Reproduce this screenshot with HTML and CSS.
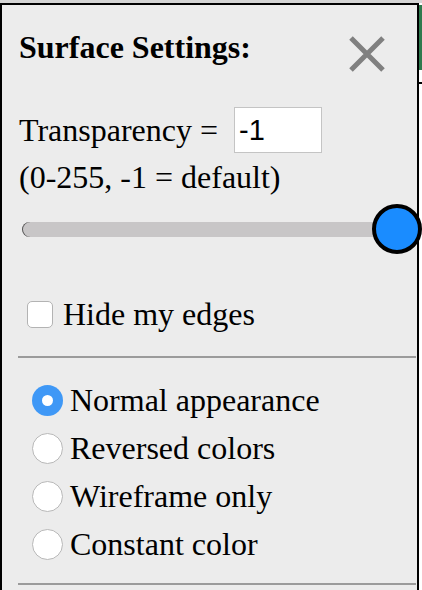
FILE: index.html
```html
<!DOCTYPE html>
<html>
<head>
<meta charset="utf-8">
<link rel="stylesheet" href="styles.css">
</head>
<body>
<div class="topbar"></div>
<div class="frame">
  <section class="panel">
    <header class="title-row">
      <h1 class="title">Surface Settings:</h1>
      <button class="close" aria-label="Close">
        <svg width="36" height="36" viewBox="0 0 36 36"><path d="M2 2L34 34M34 2L2 34" stroke="#808080" stroke-width="5" fill="none"/></svg>
      </button>
    </header>
    <div class="transp-row">
      <span class="label">Transparency =</span>
      <input class="num" type="text" value="-1">
    </div>
    <div class="hint">(0-255, -1 = default)</div>
    <div class="slider">
      <div class="track"></div>
      <div class="thumb"></div>
    </div>
    <label class="check-row">
      <span class="checkbox"></span>
      <span class="label">Hide my edges</span>
    </label>
    <hr class="sep">
    <div class="radios">
      <label class="radio-row"><span class="radio checked"></span><span class="label">Normal appearance</span></label>
      <label class="radio-row"><span class="radio"></span><span class="label">Reversed colors</span></label>
      <label class="radio-row"><span class="radio"></span><span class="label">Wireframe only</span></label>
      <label class="radio-row"><span class="radio"></span><span class="label">Constant color</span></label>
    </div>
    <hr class="sep sep-bottom">
  </section>
  <div class="side"><div class="side-green"></div><div class="side-tick"></div></div>
</div>
</body>
</html>
```

FILE: styles.css
```css
html, body {
  margin: 0;
  padding: 0;
  background: #ffffff;
  height: 100%;
  overflow: hidden;
}
body {
  font-family: "Liberation Serif", "Times New Roman", serif;
  font-size: 32px;
  color: #000;
}
.topbar {
  height: 3px;
  background: #d4d4d4;
}
.frame {
  display: flex;
  align-items: stretch;
  height: 587px;
}
.panel {
  box-sizing: border-box;
  width: 419px;
  flex: none;
  background: #ececec;
  border-top: 2px solid #000;
  border-left: 2px solid #000;
  border-right: 2px solid #000;
  padding: 24px 0 0 17px;
}
.side {
  flex: 1;
  background: #fff;
  padding-top: 2px;
}
.side-green {
  height: 65px;
  background: #2f7a4e;
}
.side-tick {
  margin-top: 12px;
  height: 2px;
  background: #000;
}
.title-row {
  display: flex;
  justify-content: space-between;
  align-items: flex-start;
  height: 36px;
  padding-right: 32px;
}
.title {
  margin: 0;
  font-size: 32px;
  font-weight: bold;
  line-height: 36px;
}
.close {
  border: 0;
  background: none;
  padding: 0;
  margin-top: 7px;
  width: 36px;
  height: 36px;
  display: block;
}
.close svg {
  display: block;
}
.label {
  line-height: 36px;
  white-space: nowrap;
}
.transp-row {
  margin-top: 42px;
  display: flex;
  align-items: center;
  height: 46px;
}
.num {
  box-sizing: border-box;
  margin: 0 0 0 16px;
  width: 88px;
  height: 46px;
  border: 1px solid #c4c4c4;
  background: #fff;
  font-family: "Liberation Sans", Arial, sans-serif;
  font-size: 29px;
  padding: 0 4px;
  color: #000;
  outline: none;
}
.hint {
  margin-top: 6px;
  line-height: 36px;
}
.slider {
  margin: 9px -5px 0 3px;
  height: 50px;
  display: flex;
  align-items: center;
}
.track {
  flex: 1;
  height: 15px;
  background: #c8c6c7;
  border-radius: 8px 0 0 8px;
  box-shadow: inset 1px 0 0 #555;
}
.thumb {
  flex: none;
  box-sizing: border-box;
  width: 50px;
  height: 50px;
  margin-left: -25px;
  border: 4px solid #000;
  border-radius: 50%;
  background: #1a8cff;
  position: relative;
  z-index: 1;
}
.check-row {
  margin-top: 42px;
  display: flex;
  align-items: center;
  height: 36px;
  gap: 10px;
}
.checkbox {
  box-sizing: border-box;
  margin-left: 8px;
  width: 26px;
  height: 27px;
  border: 1px solid #b3b3b3;
  border-radius: 5px;
  background: #fff;
  flex: none;
}
.sep {
  border: 0;
  height: 2px;
  width: 398px;
  background: #9b9b9b;
  margin: 24px 0 0 -1px;
}
.sep-bottom {
  margin-top: 15px;
}
.radios {
  margin-top: 18px;
  display: flex;
  flex-direction: column;
}
.radio-row {
  display: flex;
  align-items: center;
  height: 48px;
  gap: 7px;
}
.radio {
  box-sizing: border-box;
  margin-left: 13px;
  width: 31px;
  height: 31px;
  border-radius: 50%;
  border: 1px solid #b8b8b8;
  background: #fff;
  flex: none;
  display: flex;
  align-items: center;
  justify-content: center;
}
.radio.checked {
  border: 0;
  background: #3f98f6;
}
.radio.checked::after {
  content: "";
  width: 11px;
  height: 11px;
  border-radius: 50%;
  background: #fff;
}
```
